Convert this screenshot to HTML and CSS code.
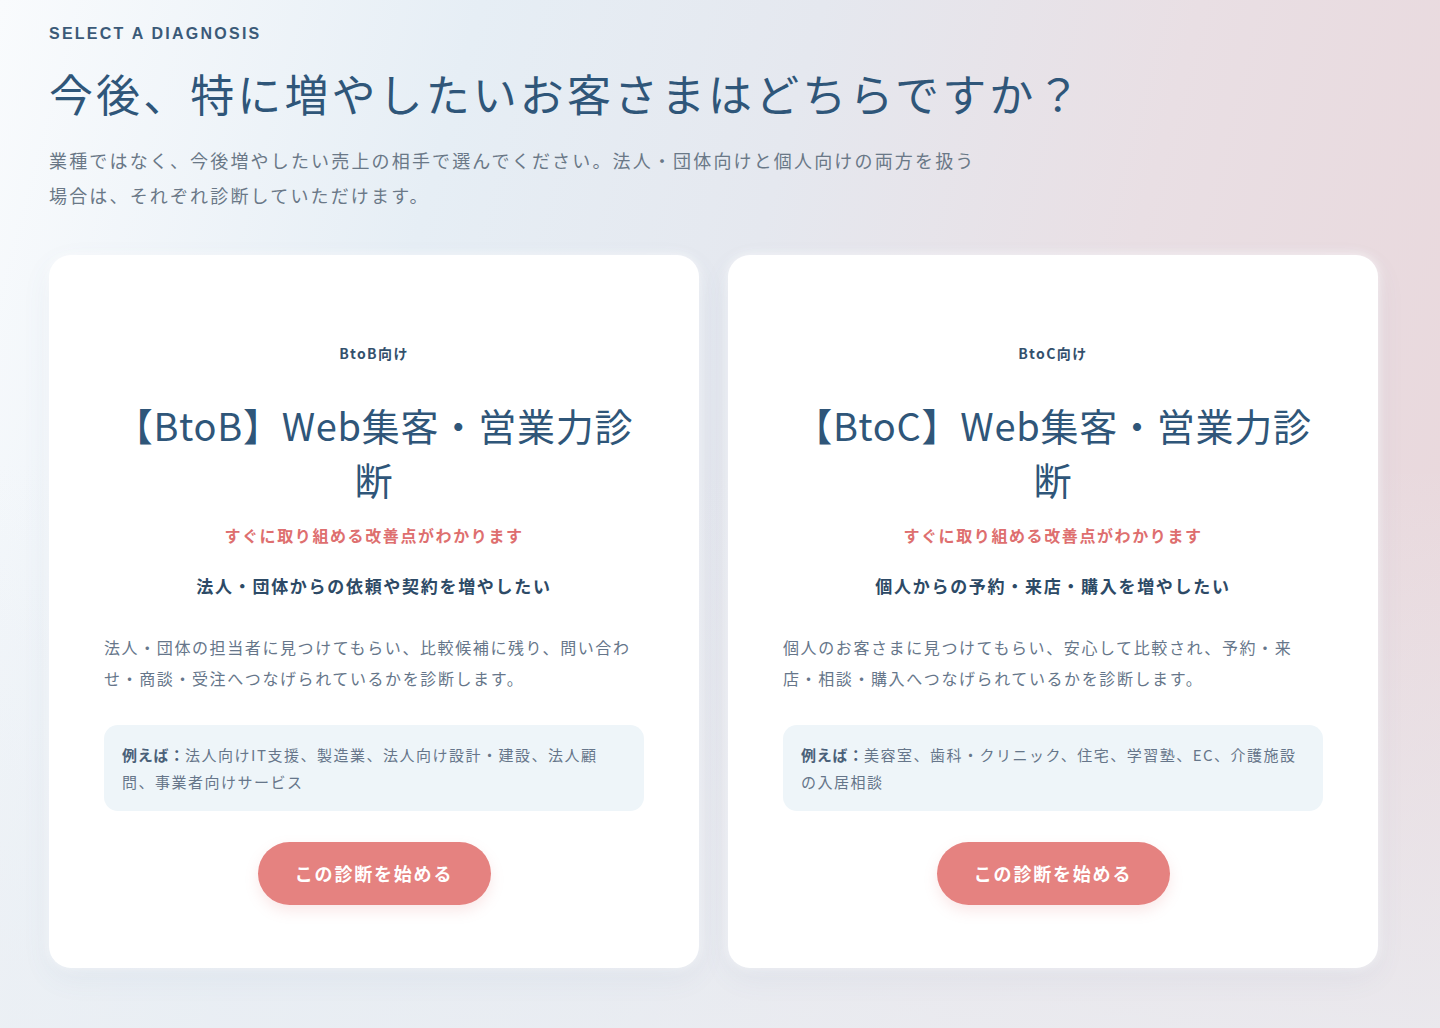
FILE: index.html
```html
<!DOCTYPE html>
<html lang="ja">
<head>
<meta charset="utf-8">
<title>診断を選択</title>
<link rel="stylesheet" href="styles.css">
</head>
<body>
<main class="page">
  <header class="intro">
    <p class="eyebrow">SELECT A DIAGNOSIS</p>
    <h1 class="headline">今後、特に増やしたいお客さまはどちらですか？</h1>
    <p class="lead">業種ではなく、今後増やしたい売上の相手で選んでください。法人・団体向けと個人向けの両方を扱う場合は、それぞれ診断していただけます。</p>
  </header>

  <section class="cards">
    <article class="card">
      <p class="card-label">BtoB向け</p>
      <h2 class="card-title">【BtoB】Web集客・営業力診断</h2>
      <p class="card-tagline">すぐに取り組める改善点がわかります</p>
      <h3 class="card-heading">法人・団体からの依頼や契約を増やしたい</h3>
      <p class="card-desc">法人・団体の担当者に見つけてもらい、比較候補に残り、問い合わせ・商談・受注へつなげられているかを診断します。</p>
      <div class="card-example"><strong class="example-key">例えば：</strong><span>法人向けIT支援、製造業、法人向け設計・建設、法人顧問、事業者向けサービス</span></div>
      <a class="card-button" href="#">この診断を始める</a>
    </article>

    <article class="card">
      <p class="card-label">BtoC向け</p>
      <h2 class="card-title">【BtoC】Web集客・営業力診断</h2>
      <p class="card-tagline">すぐに取り組める改善点がわかります</p>
      <h3 class="card-heading">個人からの予約・来店・購入を増やしたい</h3>
      <p class="card-desc">個人のお客さまに見つけてもらい、安心して比較され、予約・来店・相談・購入へつなげられているかを診断します。</p>
      <div class="card-example"><strong class="example-key">例えば：</strong><span>美容室、歯科・クリニック、住宅、学習塾、EC、介護施設の入居相談</span></div>
      <a class="card-button" href="#">この診断を始める</a>
    </article>
  </section>
</main>
</body>
</html>
```

FILE: styles.css
```css
* {
  box-sizing: border-box;
}

html, body {
  margin: 0;
  padding: 0;
}

body {
  min-height: 1028px;
  font-family: "Noto Sans CJK JP", "Noto Sans", "Liberation Sans", sans-serif;
  color: #2f5476;
  background:
    linear-gradient(to bottom, rgba(236, 239, 244, 0) 45%, rgba(234, 238, 243, 0.75) 100%),
    linear-gradient(105deg, #f9fbfd 0%, #e6eef5 28%, #e5e8ef 48%, #e9dfe4 70%, #e9d6da 100%);
}

.page {
  padding: 22px 62px 60px 49px;
}

.intro {
  margin-bottom: 42px;
}

.eyebrow {
  margin: 0;
  font-family: "Liberation Sans", "Noto Sans", sans-serif;
  font-size: 16px;
  line-height: 24px;
  font-weight: 700;
  letter-spacing: 0.14em;
  color: #3b5a78;
}

.headline {
  margin: 15px 0 0;
  font-size: 44px;
  line-height: 64px;
  font-weight: 400;
  letter-spacing: 0.07em;
  color: #2f5679;
}

.lead {
  margin: 18px 0 0;
  max-width: 940px;
  font-size: 18px;
  line-height: 35px;
  letter-spacing: 0.12em;
  color: #6a7887;
}

.cards {
  display: grid;
  grid-template-columns: 1fr 1fr;
  gap: 29px;
}

.card {
  background: #ffffff;
  border-radius: 22px;
  padding: 88px 55px 63px;
  text-align: center;
  box-shadow: 0 10px 30px rgba(90, 120, 150, 0.07), 0 0 12px rgba(255, 255, 255, 0.8);
}

.card-label {
  margin: 0;
  font-size: 14px;
  line-height: 20px;
  font-weight: 700;
  letter-spacing: 0.1em;
  color: #33506c;
}

.card-title {
  margin: 35px auto 0;
  max-width: 520px;
  font-size: 38px;
  line-height: 54px;
  font-weight: 400;
  letter-spacing: 0.02em;
  color: #2f5679;
}

.card-tagline {
  margin: 17px 0 0;
  font-size: 16px;
  line-height: 24px;
  font-weight: 700;
  letter-spacing: 0.1em;
  color: #de6f6f;
}

.card-heading {
  margin: 26px 0 0;
  font-size: 17px;
  line-height: 26px;
  font-weight: 700;
  letter-spacing: 0.1em;
  color: #2d4a66;
}

.card-desc {
  margin: 33px 0 0;
  text-align: left;
  font-size: 16px;
  line-height: 31px;
  letter-spacing: 0.1em;
  color: #66768a;
}

.card-example {
  margin-top: 31px;
  padding: 16px 22px 16px 18px;
  text-align: left;
  background: #eef5f9;
  border-radius: 14px;
  font-size: 15px;
  line-height: 27px;
  letter-spacing: 0.1em;
  color: #66768a;
}

.example-key {
  font-weight: 700;
  color: #4a6078;
  letter-spacing: 0.05em;
}

.card-button {
  display: inline-block;
  margin-top: 31px;
  width: 233px;
  height: 63px;
  line-height: 63px;
  border-radius: 32px;
  background: #e58280;
  color: #ffffff;
  font-size: 18px;
  font-weight: 700;
  letter-spacing: 0.1em;
  text-decoration: none;
  box-shadow: 0 6px 14px rgba(229, 130, 128, 0.18);
}
```
